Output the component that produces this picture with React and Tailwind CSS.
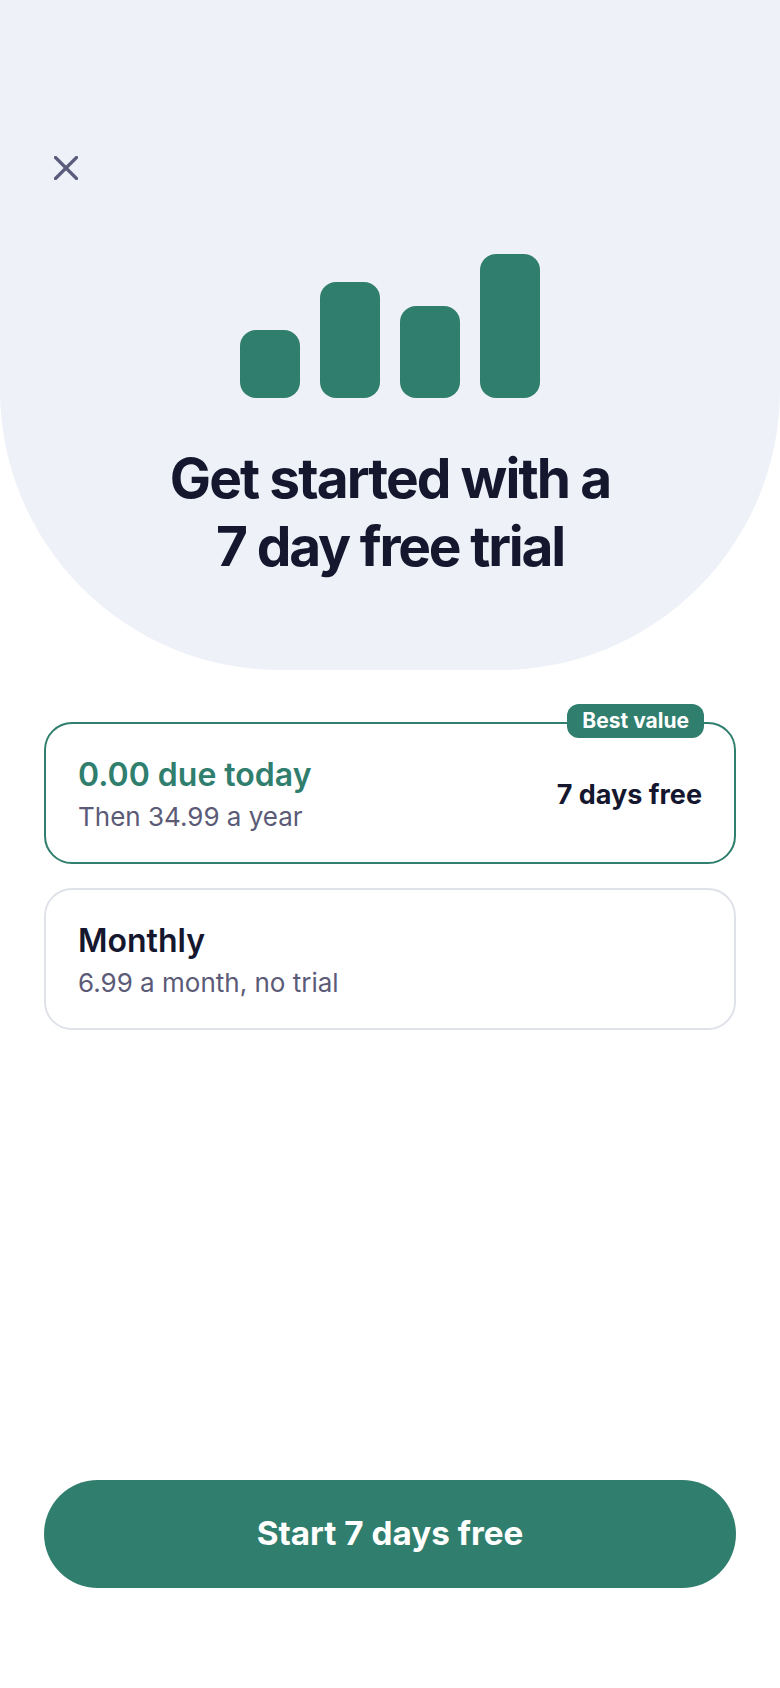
import React from "react";

const BARS = [
  "h-[68px]",
  "h-[116px]",
  "h-[92px]",
  "h-[144px]",
];

function CloseIcon() {
  return (
    <svg width="24" height="24" viewBox="0 0 24 24" fill="none" stroke="#5b5b7b" strokeWidth="3.2" strokeLinecap="round">
      <path d="M1.5 1.5L22.5 22.5" />
      <path d="M22.5 1.5L1.5 22.5" />
    </svg>
  );
}

export default function App() {
  return (
    <div className="w-[780px] h-[1688px] bg-white overflow-hidden font-['Inter',sans-serif] flex flex-col">
      <div className="h-[670px] shrink-0 bg-[#eef1f7] rounded-b-[280px] pt-[156px] flex flex-col">
        <button className="ml-[54px] w-6 h-6 block">
          <CloseIcon />
        </button>
        <div className="mt-[74px] flex justify-center items-end gap-5">
          {BARS.map((h) => (
            <div key={h} className={`${h} w-[60px] rounded-2xl bg-[#307e6d]`} />
          ))}
        </div>
        <h1 className="mt-[46px] text-center text-[55px] leading-[68px] font-bold tracking-[-0.035em] text-[#15172f]">
          Get started with a
          <br />
          <span className="tracking-[-0.04em]">7 day free trial</span>
        </h1>
      </div>

      <div className="px-11 mt-[52px] flex flex-col gap-6">
        <div className="relative h-[142px] rounded-[28px] border-2 border-[#307e6d] px-8 flex items-center justify-between">
          <div className="pt-0.5">
            <div className="text-[32px] leading-[40px] font-semibold text-[#307e6d]">0.00 due today</div>
            <div className="mt-1.5 text-[26px] leading-[32px] text-[#5b5b78]">Then 34.99 a year</div>
          </div>
          <div className="pt-[3px] text-[27px] leading-[36px] font-bold text-[#15172f]">7 days free</div>
          <div className="absolute -top-[20px] right-[30px] h-[34px] px-[15px] rounded-xl bg-[#307e6d] text-white text-[21px] leading-[34px] font-bold">
            Best value
          </div>
        </div>
        <div className="h-[142px] rounded-[28px] border-2 border-[#e0e2ea] px-8 flex items-center">
          <div className="pt-0.5">
            <div className="text-[32px] leading-[40px] font-semibold text-[#15172f]">Monthly</div>
            <div className="mt-1.5 text-[26px] leading-[32px] text-[#5b5b78]">6.99 a month, no trial</div>
          </div>
        </div>
      </div>

      <div className="px-11 mt-auto pb-[100px]">
        <button className="w-full h-[108px] rounded-full bg-[#307e6d] text-white text-[33.25px] font-bold">
          Start 7 days free
        </button>
      </div>
    </div>
  );
}
